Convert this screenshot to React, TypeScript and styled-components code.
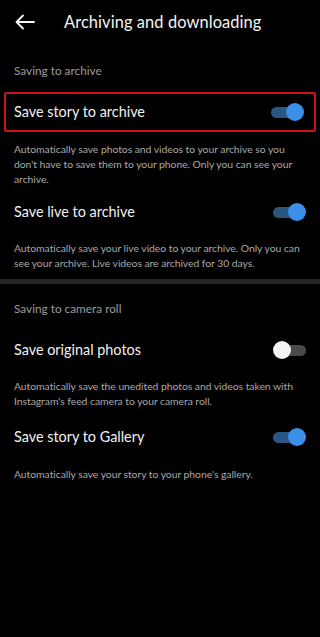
import React, { useState } from "react";
import styled, { createGlobalStyle } from "styled-components";

const Global = createGlobalStyle`
  html, body { margin: 0; padding: 0; background: #000; }
  body { font-family: Lato, "Noto Sans", sans-serif; -webkit-font-smoothing: antialiased; }
  * { box-sizing: border-box; }
`;

const Screen = styled.div`
  width: 320px;
  min-height: 637px;
  background: #000;
  color: #f2f2f2;
  display: flex;
  flex-direction: column;
`;

const Header = styled.header`
  height: 42px;
  display: flex;
  align-items: center;
  padding-left: 15px;
  gap: 29px;
`;

const BackButton = styled.button`
  width: 20px;
  height: 20px;
  padding: 0;
  border: 0;
  background: none;
  display: flex;
  align-items: center;
  justify-content: center;
  margin-top: 2px;
`;

const Title = styled.h1`
  margin: 0;
  font-size: 16.4px;
  font-weight: 400;
  color: #f5f5f5;
  letter-spacing: 0.1px;
`;

const SectionTitle = styled.div<{ $top: number }>`
  margin-top: ${(p) => p.$top}px;
  padding: 0 14px;
  font-size: 11.8px;
  line-height: 16px;
  color: #9c9c9c;
`;

const Row = styled.div<{ $top: number; $highlight?: boolean }>`
  margin: ${(p) => p.$top}px ${(p) => (p.$highlight ? 4 : 0)}px 0;
  height: 40px;
  display: flex;
  align-items: center;
  justify-content: space-between;
  padding: 0 ${(p) => (p.$highlight ? 10 : 14)}px 0 ${(p) => (p.$highlight ? 8 : 14)}px;
  border: ${(p) => (p.$highlight ? "2px solid #c8121c" : "none")};
  border-radius: 2px;
`;

const RowLabel = styled.span`
  font-size: 14.4px;
  color: #f2f2f2;
  margin-top: -1px;
`;

const Desc = styled.p<{ $top: number }>`
  margin: ${(p) => p.$top}px 0 0;
  padding: 0 20px 0 14px;
  font-size: 10.4px;
  letter-spacing: -0.05px;
  line-height: 15px;
  color: #a9a9a9;
`;

const Divider = styled.div`
  margin-top: 8px;
  height: 5px;
  background: #262626;
`;

const Track = styled.button<{ $on: boolean }>`
  position: relative;
  width: 33px;
  height: 18px;
  padding: 0;
  border: 0;
  background: none;
  cursor: pointer;
  &::before {
    content: "";
    position: absolute;
    left: ${(p) => (p.$on ? 0 : 3)}px;
    right: ${(p) => (p.$on ? 3 : 0)}px;
    top: 4px;
    height: 11px;
    border-radius: 6px;
    background: ${(p) => (p.$on ? "#2a5782" : "#4a4a4a")};
  }
`;

const Thumb = styled.span<{ $on: boolean }>`
  position: absolute;
  top: 0;
  ${(p) => (p.$on ? "right: 0;" : "left: 0;")}
  width: 18px;
  height: 18px;
  border-radius: 50%;
  background: ${(p) => (p.$on ? "#3b8fe6" : "#f2f2f2")};
`;

function Toggle({ initial }: { initial: boolean }) {
  const [on, setOn] = useState(initial);
  return (
    <Track $on={on} onClick={() => setOn(!on)} aria-pressed={on}>
      <Thumb $on={on} />
    </Track>
  );
}

export default function App() {
  return (
    <>
      <Global />
      <Screen>
        <Header>
          <BackButton aria-label="Back">
            <svg width="20" height="16" viewBox="0 0 20 16" fill="none" stroke="#f5f5f5" strokeWidth="1.8" strokeLinecap="round" strokeLinejoin="round">
              <path d="M19 8H1.5M8 1.5L1.5 8L8 14.5" />
            </svg>
          </BackButton>
          <Title>Archiving and downloading</Title>
        </Header>

        <SectionTitle $top={21}>Saving to archive</SectionTitle>
        <Row $top={13} $highlight>
          <RowLabel>Save story to archive</RowLabel>
          <Toggle initial={true} />
        </Row>
        <Desc $top={10}>
          Automatically save photos and videos to your archive so you don't have to save them to your phone. Only you can see your archive.
        </Desc>

        <Row $top={5}>
          <RowLabel>Save live to archive</RowLabel>
          <Toggle initial={true} />
        </Row>
        <Desc $top={9}>
          Automatically save your live video to your archive. Only you can see your archive. Live videos are archived for 30 days.
        </Desc>

        <Divider />

        <SectionTitle $top={17}>Saving to camera roll</SectionTitle>
        <Row $top={13}>
          <RowLabel>Save original photos</RowLabel>
          <Toggle initial={false} />
        </Row>
        <Desc $top={9}>
          Automatically save the unedited photos and videos taken with Instagram's feed camera to your camera roll.
        </Desc>

        <Row $top={8}>
          <RowLabel>Save story to Gallery</RowLabel>
          <Toggle initial={true} />
        </Row>
        <Desc $top={10}>Automatically save your story to your phone's gallery.</Desc>
      </Screen>
    </>
  );
}
